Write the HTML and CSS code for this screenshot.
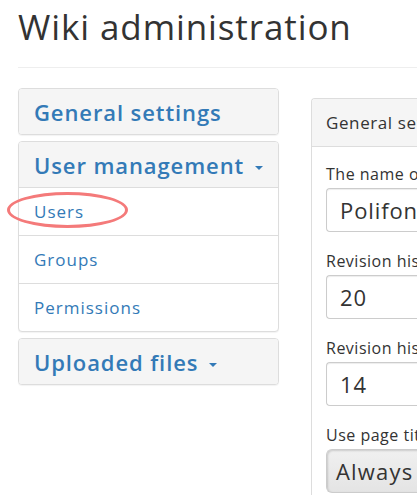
FILE: index.html
```html
<!DOCTYPE html>
<html>
<head>
<meta charset="utf-8">
<link rel="stylesheet" href="styles.css">
</head>
<body>
<div class="page">
  <h1 class="title">Wiki administration</h1>
  <div class="rule"></div>
  <div class="layout">
    <div class="sidebar">
      <div class="panel">
        <div class="panel-head panel-head-only"><a class="head-link">General settings</a></div>
      </div>
      <div class="panel">
        <div class="panel-head"><a class="head-link">User management <span class="caret"></span></a></div>
        <div class="list">
          <div class="item item-marked"><a class="item-link">Users</a><span class="ring"></span></div>
          <div class="item"><a class="item-link">Groups</a></div>
          <div class="item"><a class="item-link">Permissions</a></div>
        </div>
      </div>
      <div class="panel">
        <div class="panel-head panel-head-only"><a class="head-link">Uploaded files <span class="caret"></span></a></div>
      </div>
    </div>
    <div class="main">
      <div class="main-head">General settings</div>
      <div class="main-body">
        <div class="field">
          <div class="label">The name of the wiki</div>
          <div class="input">Polifonia wiki</div>
        </div>
        <div class="field">
          <div class="label">Revision history lines</div>
          <div class="input">20</div>
        </div>
        <div class="field">
          <div class="label">Revision history page</div>
          <div class="input">14</div>
        </div>
        <div class="field">
          <div class="label">Use page title</div>
          <div class="select">Always</div>
        </div>
      </div>
    </div>
  </div>
</div>
</body>
</html>
```
FILE: styles.css
```css
html, body {
  margin: 0;
  padding: 0;
  background: #fff;
}
body {
  font-family: "Open Sans", "DejaVu Sans", sans-serif;
  color: #333;
  overflow: hidden;
  width: 417px;
  height: 495px;
}
.page {
  padding-left: 18px;
}
.title {
  margin: 0;
  padding-top: 4px;
  height: 46px;
  font-size: 35px;
  font-weight: 400;
  line-height: 46px;
  color: #333;
  letter-spacing: 0.9px;
  white-space: nowrap;
}
.rule {
  margin-top: 17px;
  height: 1px;
  background: #eee;
}
.layout {
  display: flex;
  gap: 32px;
  margin-top: 20px;
}
.sidebar {
  flex: 0 0 261px;
  display: flex;
  flex-direction: column;
  gap: 6px;
}
.panel {
  border: 1px solid #ddd;
  border-radius: 4px;
  background: #fff;
  box-shadow: 0 1px 1px rgba(0,0,0,0.05);
}
.panel-head {
  background: #f5f5f5;
  height: 45px;
  display: flex;
  align-items: center;
  padding-left: 15px;
  border-radius: 3px 3px 0 0;
}
.panel-head-only {
  border-radius: 3px;
}
.head-link {
  color: #337ab7;
  font-size: 22px;
  font-weight: 600;
  letter-spacing: 0.9px;
  white-space: nowrap;
}
.caret {
  display: inline-block;
  width: 0;
  height: 0;
  border-top: 4px solid #337ab7;
  border-left: 4px solid transparent;
  border-right: 4px solid transparent;
  vertical-align: middle;
  margin-left: 4px;
}
.list {
  border-top: 1px solid #ddd;
}
.item {
  position: relative;
  height: 47px;
  display: flex;
  align-items: center;
  padding-left: 15px;
  border-top: 1px solid #ddd;
}
.item:first-child {
  border-top: 0;
}
.item-link {
  color: #337ab7;
  font-size: 17px;
  letter-spacing: 1px;
}
.ring {
  position: absolute;
  left: -12px;
  top: 4px;
  width: 115px;
  height: 30px;
  border: 3.5px solid #f47a7a;
  border-radius: 50%;
}
.main {
  flex: 0 0 auto;
  width: 200px;
  margin-top: 10px;
  border: 1px solid #ddd;
  border-right: 0;
  border-radius: 4px 0 0 0;
  height: 420px;
  overflow: hidden;
}
.main-head {
  background: #f5f5f5;
  height: 47px;
  border-bottom: 1px solid #ddd;
  display: flex;
  align-items: center;
  padding-left: 14px;
  font-size: 17px;
  letter-spacing: 0.6px;
  white-space: nowrap;
}
.main-body {
  padding: 16px 0 0 14px;
}
.field {
  margin-bottom: 18px;
}
.label {
  font-size: 16px;
  line-height: 22px;
  letter-spacing: 0.5px;
  white-space: nowrap;
  margin-bottom: 3px;
}
.input {
  height: 42px;
  border: 1px solid #ccc;
  border-radius: 4px;
  border-right: 0;
  display: flex;
  align-items: center;
  padding-left: 13px;
  font-size: 22px;
  letter-spacing: 0.9px;
  white-space: nowrap;
  box-shadow: inset 0 1px 1px rgba(0,0,0,0.075);
}
.select {
  height: 42px;
  border: 1px solid #ccc;
  border-radius: 6px;
  border-right: 0;
  display: flex;
  align-items: center;
  padding-left: 9px;
  font-size: 22px;
  letter-spacing: 1.2px;
  white-space: nowrap;
  background: linear-gradient(#f0f0f0, #e4e4e4);
  box-shadow: inset 1px 1px 2px rgba(0,0,0,0.15);
}
```
